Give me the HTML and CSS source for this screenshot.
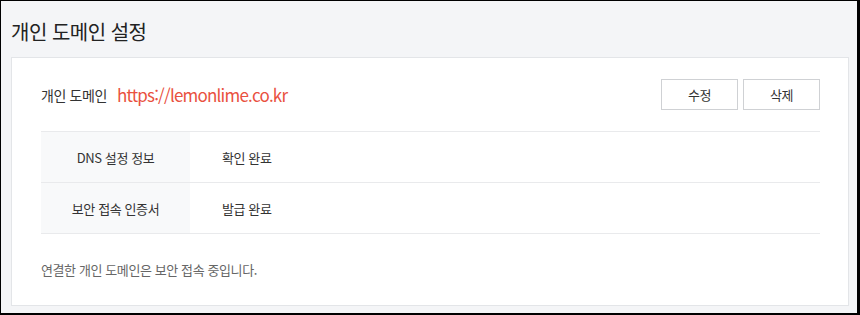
FILE: index.html
```html
<!DOCTYPE html>
<html lang="ko">
<head>
    <meta charset="UTF-8">
    <meta name="viewport" content="width=device-width, initial-scale=1.0">
    <title>개인 도메인 설정</title>
    <link rel="stylesheet" href="styles.css">
</head>
<body>
    <div class="frame">
        <h2 class="page-title">개인 도메인 설정</h2>
        <div class="card">
            <div class="domain-row">
                <span class="domain-label">개인 도메인</span>
                <a class="domain-url" href="#">https://lemonlime.co.kr</a>
                <div class="btn-group">
                    <button type="button" class="btn">수정</button>
                    <button type="button" class="btn">삭제</button>
                </div>
            </div>
            <div class="info-table">
                <div class="info-row">
                    <div class="info-key">DNS 설정 정보</div>
                    <div class="info-value">확인 완료</div>
                </div>
                <div class="info-row">
                    <div class="info-key">보안 접속 인증서</div>
                    <div class="info-value">발급 완료</div>
                </div>
            </div>
            <p class="notice">연결한 개인 도메인은 보안 접속 중입니다.</p>
        </div>
    </div>
</body>
</html>
```

FILE: styles.css
```css
*{
  box-sizing: border-box;
}

body{
  margin: 0;
  font-family: "Noto Sans CJK KR", "Noto Sans", sans-serif;
  color: #333;
  letter-spacing: -0.4px;
}

.frame{
  height: 315px;
  background-color: #f4f5f7;
  border-style: solid;
  border-color: #000;
  border-width: 1px 3px 2px 1px;
}

.page-title{
  margin: 0;
  padding: 17px 0 11px 10px;
  font-size: 20px;
  line-height: 28px;
  font-weight: 400;
  color: #222;
  letter-spacing: -0.5px;
}

.card{
  margin: 0 8px 0 10px;
  padding: 0 28px 0 29px;
  background-color: #fff;
  border: 1px solid #e3e5e8;
}

.domain-row{
  display: flex;
  align-items: center;
  height: 74px;
  border-bottom: 1px solid #e9eaec;
}

.domain-label{
  font-size: 14px;
  color: #333;
}

.domain-url{
  margin-left: 10px;
  font-size: 17px;
  letter-spacing: -0.8px;
  color: #e9513f;
  text-decoration: none;
}

.btn-group{
  margin-left: auto;
  display: flex;
  gap: 5px;
}

.btn{
  width: 77px;
  height: 31px;
  background-color: #fff;
  border: 1px solid #cfd1d4;
  font-family: inherit;
  font-size: 13px;
  letter-spacing: inherit;
  color: #333;
  cursor: pointer;
}

.info-row{
  display: flex;
  height: 51px;
  border-bottom: 1px solid #e9eaec;
}

.info-key{
  width: 149px;
  display: flex;
  align-items: center;
  justify-content: center;
  background-color: #f8f9fa;
  font-size: 13px;
}

.info-value{
  display: flex;
  align-items: center;
  padding-left: 32px;
  font-size: 13px;
}

.notice{
  margin: 0;
  height: 71px;
  display: flex;
  align-items: center;
  font-size: 13px;
  color: #666;
}
```
